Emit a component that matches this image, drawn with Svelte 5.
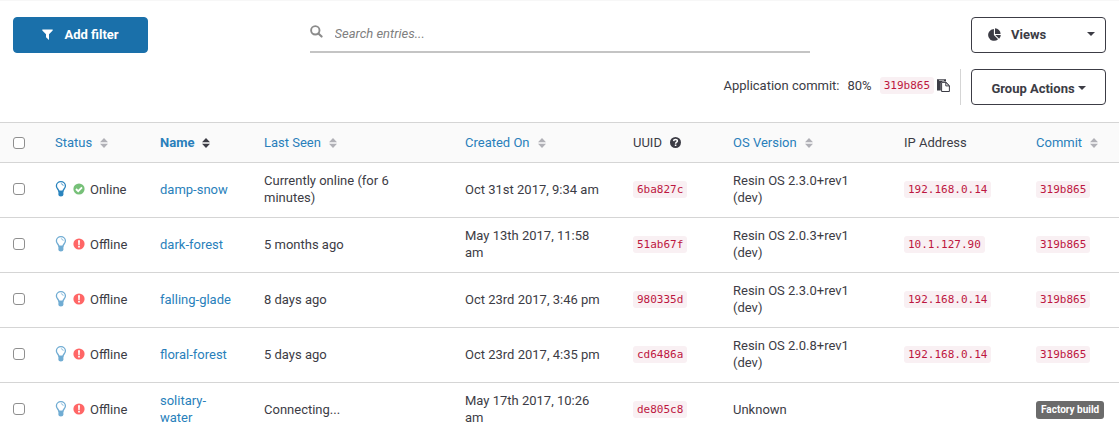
<script>
  const columns = [
    { label: 'Status', width: 105, sortable: true },
    { label: 'Name', width: 104, sortable: true, active: true },
    { label: 'Last Seen', width: 201, sortable: true },
    { label: 'Created On', width: 168, sortable: true },
    { label: 'UUID', width: 100, help: true },
    { label: 'OS Version', width: 171, sortable: true },
    { label: 'IP Address', width: 132 },
    { label: 'Commit', width: 96, sortable: true }
  ];

  const devices = [
    { online: true, name: 'damp-snow', seen: 'Currently online (for 6 minutes)', created: 'Oct 31st 2017, 9:34 am', uuid: '6ba827c', os: 'Resin OS 2.3.0+rev1 (dev)', ip: '192.168.0.14', commit: '319b865' },
    { online: false, name: 'dark-forest', seen: '5 months ago', created: 'May 13th 2017, 11:58 am', uuid: '51ab67f', os: 'Resin OS 2.0.3+rev1 (dev)', ip: '10.1.127.90', commit: '319b865' },
    { online: false, name: 'falling-glade', seen: '8 days ago', created: 'Oct 23rd 2017, 3:46 pm', uuid: '980335d', os: 'Resin OS 2.3.0+rev1 (dev)', ip: '192.168.0.14', commit: '319b865' },
    { online: false, name: 'floral-forest', seen: '5 days ago', created: 'Oct 23rd 2017, 4:35 pm', uuid: 'cd6486a', os: 'Resin OS 2.0.8+rev1 (dev)', ip: '192.168.0.14', commit: '319b865' },
    { online: false, name: 'solitary-water', seen: 'Connecting...', created: 'May 17th 2017, 10:26 am', uuid: 'de805c8', os: 'Unknown', ip: '', commit: '' }
  ];
</script>

<main>
  <div class="toolbar">
    <button class="btn primary">
      <svg width="11" height="12" viewBox="0 0 11 12" aria-hidden="true"><path d="M.3 1.6h10.4v.8L7 6.3v5.6L4 9.2V6.3L.3 2.4z" fill="currentColor" /></svg>
      Add filter
    </button>
    <label class="search">
      <svg width="13" height="13" viewBox="0 0 13 13" aria-hidden="true"><circle cx="5.3" cy="5.3" r="4.2" fill="none" stroke="currentColor" stroke-width="1.9" /><path d="M8.4 8.4l3.2 3.2" stroke="currentColor" stroke-width="2.1" stroke-linecap="round" /></svg>
      <input type="text" placeholder="Search entries..." aria-label="Search entries" />
    </label>
    <button class="btn views">
      <svg width="13" height="13" viewBox="0 0 13 13" aria-hidden="true"><path d="M5.9 1v6l4.2 4.2A5.9 5.9 0 1 1 5.9 1zM7 .3a5.6 5.6 0 0 1 5.6 5.6H7zM7.3 6.9h5.5a5.8 5.8 0 0 1-1.7 3.8z" fill="currentColor" /></svg>
      <span>Views</span>
      <i class="caret"></i>
    </button>
  </div>

  <div class="actions">
    <div class="summary">
      <span>Application commit:</span>
      <span>80%</span>
      <code>319b865</code>
      <button class="copy" aria-label="Copy commit">
        <svg width="13" height="13" viewBox="0 0 13 13" aria-hidden="true"><path d="M0 .2h9v2.4H5.4L3.8 4v7.6H0z" fill="currentColor" /><path d="M2 1.4h5" stroke="#fff" stroke-width=".6" /><path d="M4.6 3.4h4.4l3.4 3.3v5.8H4.6z" fill="#fff" stroke="currentColor" stroke-width="1" /><path d="M8.8 3.4v3.5h3.6z" fill="#fff" stroke="currentColor" stroke-width="1" /></svg>
      </button>
    </div>
    <button class="btn group">Group Actions <i class="caret"></i></button>
  </div>

  <table>
    <colgroup>
      <col style="width: 42px" />
      {#each columns as column}<col style="width: {column.width}px" />{/each}
    </colgroup>
    <thead>
      <tr>
        <th><input type="checkbox" aria-label="Select all devices" /></th>
        {#each columns as column}
          <th scope="col">
            {#if column.sortable}
              <button class="sort" class:active={column.active}>
                {column.label}
                <svg width="8" height="10" viewBox="0 0 8 10" aria-hidden="true"><path d="M4 0l4 4.2H0zM4 10L0 5.8h8z" fill="currentColor" /></svg>
              </button>
            {:else}
              <span class="plain">
                {column.label}
                {#if column.help}
                  <svg width="11" height="11" viewBox="0 0 11 11" aria-hidden="true"><circle cx="5.5" cy="5.5" r="5.5" fill="currentColor" /><path d="M3.6 4.1C3.7 1.9 7.5 2 7.4 4.1 7.4 5.3 5.6 5.2 5.6 6.7" fill="none" stroke="#fff" stroke-width="1.5" /><path d="M4.8 7.5h1.6V9H4.8z" fill="#fff" /></svg>
                {/if}
              </span>
            {/if}
          </th>
        {/each}
      </tr>
    </thead>
    <tbody>
      {#each devices as device}
        <tr>
          <td><input type="checkbox" aria-label="Select {device.name}" /></td>
          <td>
            <span class="status">
              <svg class="bulb" class:dim={!device.online} width="12" height="16" viewBox="0 0 12 16" aria-hidden="true"><path d="M4 10.4C3.7 8.3 1.4 7.4 1.4 5a4.4 4.2 0 0 1 9 0C10.4 7.4 8.1 8.3 7.8 10.4z" fill="#fff" stroke="currentColor" stroke-width="1.3" /><path d="M5.9 2.8c1.4 0 2.1.8 2.3 2" fill="none" stroke="currentColor" stroke-width=".8" /><path d="M3.4 9.7h5v4q0 1.7-2.5 1.7t-2.5-1.7z" fill="currentColor" /></svg>
              {#if device.online}
                <svg width="12" height="12" viewBox="0 0 12 12" aria-hidden="true"><circle cx="6" cy="6" r="5.6" fill="#76c078" /><path d="M3 6l2.2 2.2L9 4.3" fill="none" stroke="#fff" stroke-width="1.8" /></svg>
              {:else}
                <svg width="12" height="12" viewBox="0 0 12 12" aria-hidden="true"><circle cx="6" cy="6" r="5.6" fill="#ff6666" /><path d="M5 2.3h2l-.3 4.6H5.3zM5.1 7.8h1.8v1.7H5.1z" fill="#fff" /></svg>
              {/if}
              <span>{device.online ? 'Online' : 'Offline'}</span>
            </span>
          </td>
          <td><a href="#{device.name}">{device.name}</a></td>
          <td>{device.seen}</td>
          <td>{device.created}</td>
          <td><code>{device.uuid}</code></td>
          <td>{device.os}</td>
          <td>{#if device.ip}<code>{device.ip}</code>{/if}</td>
          <td>{#if device.commit}<code>{device.commit}</code>{:else}<span class="badge">Factory build</span>{/if}</td>
        </tr>
      {/each}
    </tbody>
  </table>
</main>

<style>
  :global(body) {
    margin: 0;
    background: #fff;
  }

  main {
    border-top: 1px solid #f7f7f7;
    overflow: hidden;
    color: #3c3c45;
    font: 13px/17px Roboto, sans-serif;
  }

  button {
    font: inherit;
    color: inherit;
    background: none;
    border: 0;
    padding: 0;
    cursor: pointer;
  }

  svg {
    display: block;
    flex: none;
  }

  .toolbar {
    display: grid;
    grid-template-columns: 1fr 500px 1fr;
    align-items: start;
    padding: 16px 13px;
  }

  .btn {
    box-sizing: border-box;
    width: 135px;
    height: 36px;
    display: flex;
    align-items: center;
    border: 1px solid #3c3c45;
    border-radius: 4px;
    font-weight: 700;
  }

  .primary {
    justify-content: center;
    gap: 11px;
    padding-bottom: 2px;
    color: #fff;
    background: #1a70aa;
    border-color: #1a70aa;
  }

  .search {
    display: flex;
    align-items: center;
    gap: 12px;
    height: 34px;
    color: #8b8b8b;
    border-bottom: 2px solid #c4c4c4;
  }

  .search svg {
    margin-bottom: 6px;
  }

  .search input {
    flex: 1;
    min-width: 0;
    padding: 0 0 2px;
    border: 0;
    outline: 0;
    background: none;
    font: italic 13px/17px Roboto, sans-serif;
    color: #3c3c45;
  }

  .search input::placeholder {
    color: #808080;
    opacity: 1;
  }

  .views {
    justify-self: end;
    gap: 10px;
    padding: 0 10px 2px 16px;
  }

  .caret {
    border: 4px solid transparent;
    border-top-color: currentColor;
    border-bottom: 0;
  }

  .views .caret {
    margin-left: auto;
  }

  .actions {
    display: flex;
    justify-content: flex-end;
    padding: 0 13px 17px;
  }

  .summary {
    display: flex;
    align-items: flex-start;
    box-sizing: border-box;
    padding: 8px 10px 0 0;
    margin-right: 10px;
    border-right: 1px solid #d5d5d5;
  }

  .summary span {
    margin-right: 8px;
  }

  .copy {
    margin: 2px 0 0 3px;
  }

  .group {
    justify-content: center;
    gap: 3px;
    padding-top: 2px;
  }

  code {
    display: inline-block;
    padding: 0 4px;
    border-radius: 3px;
    color: #bd1640;
    background: #f9f0f3;
    font: 11px/17px "DejaVu Sans Mono", monospace;
    vertical-align: top;
  }

  table {
    width: 100%;
    table-layout: fixed;
    border-collapse: collapse;
  }

  th,
  td {
    padding: 10px 13px;
    border-top: 1px solid #d5d5d5;
    text-align: left;
    font-weight: 400;
    vertical-align: middle;
  }

  th {
    height: 19px;
    background: #fafafa;
    white-space: nowrap;
  }

  td {
    height: 34px;
    padding: 9px 13px 11px;
  }

  td code {
    margin-top: 1px;
  }

  input[type='checkbox'] {
    appearance: none;
    display: block;
    width: 12px;
    height: 12px;
    margin: 0;
    box-sizing: border-box;
    border: 1px solid #8f8f8f;
    border-radius: 3px;
    background: #fff;
  }

  .sort,
  .plain {
    display: flex;
    align-items: center;
    gap: 8px;
  }

  .sort {
    color: #297fbb;
  }

  .sort svg {
    color: #b0b0b6;
  }

  .sort.active {
    font-weight: 700;
  }

  .sort.active svg {
    color: #3c3c45;
  }

  .status {
    display: flex;
    align-items: center;
    gap: 5px;
  }

  .bulb {
    margin-right: 1px;
    color: #2a84be;
  }

  .bulb.dim {
    color: #70acd3;
  }

  a {
    color: #297fbb;
    text-decoration: none;
  }

  .badge {
    display: inline-block;
    margin-top: 2px;
    padding: 0 5px;
    border-radius: 3px;
    color: #fff;
    background: #6b6b6b;
    font-size: 10px;
    font-weight: 700;
    line-height: 18px;
    white-space: nowrap;
    vertical-align: middle;
  }
</style>
